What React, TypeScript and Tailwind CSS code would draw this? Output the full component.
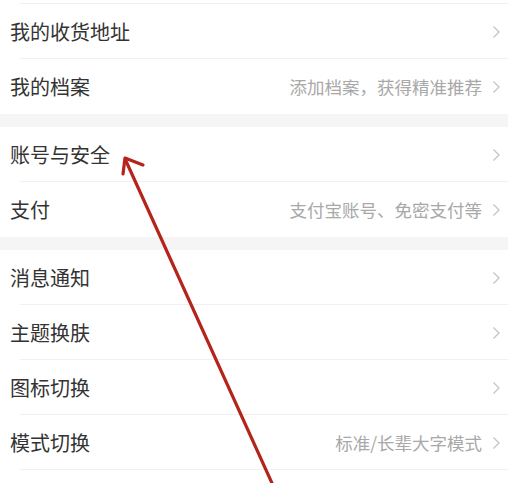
import React from "react";

type Row = { title: string; sub?: string };

const Chevron = () => (
  <svg width="9" height="14" viewBox="0 0 9 14" className="shrink-0">
    <path d="M1.5 1.5 L7 7 L1.5 12.5" fill="none" stroke="#c4c4c4" strokeWidth="1.3" />
  </svg>
);

const Item = ({ row, last }: { row: Row; last?: boolean }) => (
  <div className="h-[55px] flex items-center bg-white relative">
    <span className="pl-[10px] text-[20px] text-[#333333] leading-none">{row.title}</span>
    <div className="ml-auto flex items-center gap-[10px] pr-[7px]">
      {row.sub && <span className="text-[17.5px] text-[#a8a8a8] leading-none">{row.sub}</span>}
      <Chevron />
    </div>
    {!last && <div className="absolute left-[20px] right-0 bottom-0 h-px bg-[#f0f0f0]" />}
  </div>
);

const Group = ({ rows }: { rows: Row[] }) => (
  <div className="bg-white">
    {rows.map((r, i) => (
      <Item key={r.title} row={r} last={i === rows.length - 1} />
    ))}
  </div>
);

export default function App() {
  return (
    <div
      className="relative w-[508px] h-[483px] overflow-hidden bg-white"
      style={{ fontFamily: '"Noto Sans CJK SC", "Noto Sans", sans-serif' }}
    >
      <div className="h-[4px] bg-white relative">
        <div className="absolute left-[20px] right-0 bottom-0 h-px bg-[#f0f0f0]" />
      </div>
      <Group
        rows={[
          { title: "我的收货地址" },
          { title: "我的档案", sub: "添加档案，获得精准推荐" },
        ]}
      />
      <div className="h-[13px] bg-[#f5f5f5]" />
      <Group
        rows={[
          { title: "账号与安全" },
          { title: "支付", sub: "支付宝账号、免密支付等" },
        ]}
      />
      <div className="h-[13px] bg-[#f5f5f5]" />
      <Group
        rows={[
          { title: "消息通知" },
          { title: "主题换肤" },
          { title: "图标切换" },
          { title: "模式切换", sub: "标准/长辈大字模式" },
          { title: "" },
        ]}
      />
      <svg
        className="absolute inset-0 pointer-events-none"
        width="508"
        height="483"
        viewBox="0 0 508 483"
      >
        <line x1="276" y1="492" x2="126" y2="161" stroke="#b5241b" strokeWidth="3.2" strokeLinecap="round" />
        <polyline
          points="123,174 125,158 143,165"
          fill="none"
          stroke="#b5241b"
          strokeWidth="3.2"
          strokeLinecap="round"
          strokeLinejoin="round"
        />
      </svg>
    </div>
  );
}
